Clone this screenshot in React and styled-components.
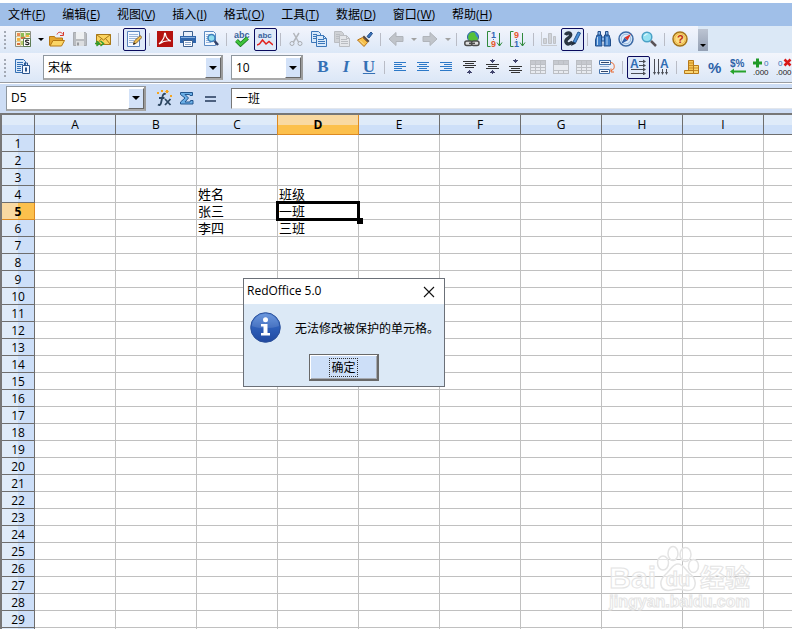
import React, { useState } from 'react'
import styled, { createGlobalStyle, css } from 'styled-components'

const GlobalStyle = createGlobalStyle`
  * {
    box-sizing: border-box;
  }
  body {
    margin: 0;
    overflow: hidden;
    background: #fff;
    color: #000;
    font: 12px "Open Sans", "Noto Sans CJK SC", sans-serif;
  }
  button, input, select {
    font: inherit;
    color: inherit;
  }
`

const Window = styled.div`
  position: relative;
  display: flex;
  flex-direction: column;
  height: 100vh;
  padding-top: 3px;
  overflow: hidden;
`
const MenuBar = styled.nav`
  display: flex;
  flex: none;
  gap: 1px;
  height: 23px;
  background: #a0bfe8;
`
const MenuItem = styled.button`
  height: 23px;
  padding: 0 8px;
  border: none;
  background: none;
  white-space: nowrap;
  line-height: 23px;

  &:hover {
    background: #c3d8f4;
  }
`
const Toolbar = styled.div`
  display: flex;
  flex: none;
  align-items: center;
  height: ${(p) => (p.$last ? '29px' : '27px')};
  background: #dbe8f6;
  overflow: hidden;
`
const ToolGroup = styled.div`
  display: flex;
  flex: none;
  align-items: center;
  height: 100%;
  padding-right: ${(p) => (p.$open ? '0' : '6px')};
  background: linear-gradient(#f3f5fc, #dbe7f7);
`
const Grip = styled.span`
  width: 2px;
  height: 18px;
  margin: 0 6px 0 4px;
  background: repeating-linear-gradient(#a3a9b4 0 2px, transparent 2px 4px);
`
const ToolButton = styled.button`
  display: grid;
  place-items: center;
  flex: none;
  width: 23px;
  height: 23px;
  padding: 0 1px 1px 0;
  border: 1px solid transparent;
  border-radius: 2px;
  background: none;

  ${(p) => p.$active && css`
    border-color: #0a0a5c;
    background: #dfe9f8;
  `}
`
const LetterButton = styled(ToolButton)`
  color: #3571b5;
  font: ${(p) => (p.$italic ? 'italic' : 'normal')} bold 17px/20px "Liberation Serif", serif;
  text-decoration: ${(p) => (p.$underline ? 'underline' : 'none')};
`
const DropButton = styled.button`
  display: grid;
  place-items: center;
  width: 11px;
  height: 23px;
  padding: 0;
  border: none;
  background: none;

  &::after {
    content: "";
    border: 3px solid transparent;
    border-top-color: ${(p) => (p.disabled ? '#a2a2a2' : '#000')};
    border-bottom: none;
  }
`
const Separator = styled.span`
  width: 1px;
  height: 13px;
  margin: 0 4px 0 3px;
  background: #b9bcc6;
`
const Overflow = styled.button`
  align-self: center;
  display: flex;
  flex: none;
  align-items: flex-end;
  justify-content: center;
  width: 10px;
  height: 22px;
  padding: 0 0 4px;
  border: none;
  background: linear-gradient(#bcc4d2, #94a0b4);

  &::after {
    content: "";
    border: 3px solid transparent;
    border-top-color: #000;
    border-bottom: none;
  }
`
const Combo = styled.div`
  display: flex;
  flex: none;
  width: ${(p) => p.$width};
  height: 25px;
  margin-left: ${(p) => p.$gap || '0'};
  border: 1px solid #8f979f;
  border-right: 2px solid #9b9b9b;
  border-bottom: 2px solid #a9a9a9;
  background: #fff;
`
const ComboInput = styled.input`
  flex: 1;
  min-width: 0;
  padding: 0 0 0 4px;
  border: none;
  outline: none;
  background: none;
  font-size: 12px;
`
const ComboArrow = styled.button`
  display: grid;
  place-items: center;
  flex: none;
  width: 16px;
  margin: 1px 0 0;
  padding: 0;
  border: 1px solid #fff;
  border-right: 1px solid #666;
  border-bottom: 1px solid #666;
  background: #d3e2f8;

  &::after {
    content: "";
    border: 4px solid transparent;
    border-top-color: #000;
    border-bottom: none;
  }
`
const Spacer = styled.span`
  flex: none;
  width: 9px;
`
const FormulaBar = styled.div`
  display: flex;
  flex: none;
  align-items: center;
  height: 31px;
  padding-left: 6px;
  border-top: 1px solid #9a9da2;
  box-shadow: inset 0 1px #fff;
  background: #cdddf5;
`
const FormulaTools = styled.div`
  display: flex;
  flex: none;
  margin: 0 9px 0 7px;
`
const FormulaInput = styled.input`
  flex: 1;
  min-width: 0;
  height: 21px;
  padding: 0 4px;
  border: 1px solid #777;
  border-right: none;
  border-bottom-color: #e2e6ec;
  outline: none;
  background: #fff;
`

const SheetArea = styled.main`
  flex: 1;
  min-height: 0;
  overflow: hidden;
  border-top: 2px solid #777;
  border-left: 2px solid #777;
`
const Sheet = styled.table`
  width: max-content;
  table-layout: fixed;
  border-collapse: separate;
  border-spacing: 0;
`
const Corner = styled.th`
  width: 33px;
  height: 20px;
  padding: 0;
  border-right: 1px solid #6e6e6e;
  border-bottom: 1px solid #6e6e6e;
  background: linear-gradient(#dfebf9 50%, #cfe0f8 50%);
`
const ColHead = styled.th`
  width: 81px;
  height: 20px;
  padding: 0;
  border-right: 1px solid ${(p) => (p.$selected ? '#dd8a22' : '#6e6e6e')};
  border-bottom: 1px solid ${(p) => (p.$selected ? '#dd8a22' : '#6e6e6e')};
  box-shadow: ${(p) => (p.$selected ? '-1px 0 #dd8a22' : 'none')};
  background: ${(p) => (p.$selected
    ? 'linear-gradient(#f9d9a2 50%, #fcc04c 50%)'
    : 'linear-gradient(#dfebf9 50%, #cddff8 50%)')};
  font-weight: ${(p) => (p.$selected ? 700 : 400)};
  line-height: 19px;
`
const RowHead = styled.th`
  height: 17px;
  padding: 1px 0 0;
  border-right: 1px solid ${(p) => (p.$selected ? '#dd8a22' : '#6e6e6e')};
  border-bottom: 1px solid ${(p) => (p.$selected ? '#dd8a22' : '#6e6e6e')};
  background: ${(p) => (p.$selected
    ? 'linear-gradient(90deg, #f9d9a2 50%, #fcc04c 50%)'
    : 'linear-gradient(90deg, #dfebf9 50%, #cddff8 50%)')};
  font-weight: ${(p) => (p.$selected ? 700 : 400)};
  line-height: 15px;
`
const Cell = styled.td`
  height: 17px;
  padding: 0 0 0 1px;
  border-right: 1px solid #c0c0c0;
  border-bottom: 1px solid #c0c0c0;
  font-size: 13px;
  line-height: 16px;
  white-space: nowrap;

  ${(p) => p.$selected && css`
    position: relative;

    &::before {
      content: "";
      position: absolute;
      inset: -2px;
      border: 3px solid #000;
    }
    &::after {
      content: "";
      position: absolute;
      right: -5px;
      bottom: -5px;
      width: 6px;
      height: 6px;
      background: #000;
    }
  `}
`

const Dialog = styled.section`
  position: absolute;
  left: 243px;
  top: 278px;
  border: 1px solid #6b7078;
  background: #dce9f6;
`
const DialogTitle = styled.header`
  display: flex;
  align-items: center;
  justify-content: space-between;
  height: 25px;
  padding: 0 9px 2px 3px;
  background: #fff;
`
const DialogClose = styled.button`
  display: grid;
  padding: 2px 0 0;
  border: none;
  background: none;
`
const DialogBody = styled.div`
  display: flex;
  align-items: center;
  gap: 14px;
  padding: 8px 5px 0 6px;
`
const Message = styled.p`
  margin: 0;
  white-space: nowrap;
`
const DialogActions = styled.div`
  display: flex;
  justify-content: center;
  padding: 11px 0 5px;
`
const OkButton = styled.button`
  display: grid;
  place-items: center;
  width: 70px;
  height: 27px;
  padding: 0;
  border: 1px solid #696969;
  border-right-width: 2px;
  border-bottom-width: 2px;
  box-shadow: inset 1px 1px #fff, inset -1px -1px #a6aab2;
  background: #cddff8;

  span {
    padding: 0 1px;
    border: 1px dotted #333;
    line-height: 17px;
  }
`

const Watermark = styled.div`
  position: absolute;
  right: 42px;
  bottom: 17px;
  display: flex;
  flex-direction: column;
  color: rgba(255, 255, 255, 0.5);
  font-family: "Liberation Sans", "Noto Sans CJK SC", sans-serif;
  font-weight: 700;
  pointer-events: none;
  -webkit-text-stroke: 1px #e4e4e4;
`
const WatermarkTop = styled.div`
  display: flex;
  align-items: flex-end;
  height: 47px;
  font-size: 30px;
  line-height: 28px;
`
const Paw = styled.span`
  display: grid;
  place-items: end center;
  width: 44px;

  > * {
    grid-area: 1 / 1;
  }
  b {
    font-size: 20px;
    line-height: 25px;
  }
`
const WatermarkCjk = styled.span`
  font-size: 25px;
`
const WatermarkUrl = styled.span`
  font-size: 16px;
  line-height: 20px;
`

/* ---------- icons ---------- */

const Icon = ({ children, size = 16, crisp }) => (
  <svg width={size} height={size} viewBox={`0 0 ${size} ${size}`} fill="none" shapeRendering={crisp ? 'crispEdges' : 'auto'} aria-hidden="true">
    {children}
  </svg>
)
const IconText = styled.text`
  font: bold ${(p) => p.$size || '8px'} "Liberation Sans", sans-serif;
`

const NewIcon = () => (
  <Icon>
    <path d="M.5.5h15v15H.5z" fill="#f7f3dc" stroke="#8c8f83" />
    <path d="M1 5.500h14M1 10.500h6M5.500 1v14M10.500 1v6" stroke="#d6cfa6" />
    <path d="M2 2h3v3H2z" fill="#ea8c52" />
    <path d="M6 2h3v4H6zM11 2h4v2h-4z" fill="#8dbb54" />
    <path d="M11 4h3v2h-3zM2 7h3v3H2z" fill="#f4b63e" />
    <path d="M6 6h4v2H6zM2 12h3v2H2z" fill="#d9713c" />
    <path d="M6 10h2v4H6z" fill="#b7cb6a" />
    <path d="M8.500 7.500h7v8h-7z" fill="#fff" stroke="#5d7d55" />
    <path d="M14 9.500c-1-.7-3.500-.7-3.500.8 0 1.400 3.500.8 3.500 2.200 0 1.300-2.500 1.300-3.700.6" stroke="#222" strokeWidth="1.200" />
  </Icon>
)
const OpenIcon = () => (
  <Icon>
    <path d="M.5 14.500V5.500h5l1 1.500h7v3" fill="#e3a52f" stroke="#b67814" />
    <path d="M1 15l3-5.500h11.500l-3 5.500z" fill="#fbd566" stroke="#b67814" />
    <path d="M8 3.500c1-3 4.500-3 6 0M14.500 1v3.500H11" stroke="#d8392b" />
  </Icon>
)
const SaveIcon = () => (
  <Icon>
    <path d="M1.500 1.500h12l1 1v12h-13z" fill="#b9bcc1" stroke="#a9acb1" />
    <path d="M4 1h8v7H4z" fill="#eef0f2" />
    <path d="M4 10h8v5H4z" fill="#dcdee1" />
    <path d="M6 11.500v3" stroke="#989ba0" strokeWidth="2" />
  </Icon>
)
const MailIcon = () => (
  <Icon>
    <path d="M1.500 3.500h14v10h-14z" fill="#fbd35f" stroke="#a97818" />
    <path d="M1.500 3.500l7 5.500 7-5.500M1.500 13.500l5-6M15.500 13.500l-5-6" stroke="#a97818" />
    <path d="M0 12.500h4M1.500 10l3 2.500-3 2.500M5.500 10l3 2.500-3 2.500" stroke="#2e9e30" strokeWidth="1.500" />
  </Icon>
)
const EditIcon = () => (
  <Icon>
    <path d="M1.500.5h12v15h-12z" fill="#f5f9ff" stroke="#5a84bd" />
    <path d="M3 3.500h9M3 5.500h9M3 7.500h8M3 9.500h5M3 11.500h4" stroke="#9ab5da" />
    <path d="M7.500 13l.8-3 6-5.500 1.500 2-5.500 5.700z" fill="#f0bd4a" stroke="#7e643a" />
    <path d="M7 14l1-2.500 1.500 1.500z" fill="#222" />
  </Icon>
)
const PdfIcon = () => (
  <Icon>
    <path d="M0 0h16v16H0z" fill="#b5120f" />
    <path d="M2 13C5 10.500 7.500 6 7.500 3c0-1.200 1-1.200 1 0C8.500 6 11 9.500 14 10c-4-.8-8 .3-12 3z" stroke="#fff" strokeWidth="1.200" />
  </Icon>
)
const PrintIcon = () => (
  <Icon>
    <path d="M3.500.5h9v5h-9z" fill="#e9f0fa" stroke="#3e618f" />
    <path d="M0 5h16v7H0z" fill="#2f66ad" />
    <path d="M1 6.500h14" stroke="#8bb2e0" />
    <path d="M3.500 9.500h9v6h-9z" fill="#fff" stroke="#3e618f" />
    <path d="M5 11.500h6M5 13.500h6" stroke="#8aa5c9" />
  </Icon>
)
const PreviewIcon = () => (
  <Icon>
    <path d="M1.500.5h9l2 2v12h-11z" fill="#f4f8fe" stroke="#5c8ac2" />
    <path d="M3 3.500h5M3 5.500h4M3 7.500h3M3 9.500h3M3 11.500h5" stroke="#9ab5da" />
    <circle cx="8.500" cy="7" r="3.500" fill="#8fdcee" stroke="#3c7ebb" strokeWidth="1.500" />
    <path d="M11.500 10l3.500 4" stroke="#34436a" strokeWidth="2.500" />
  </Icon>
)
const SpellIcon = () => (
  <Icon>
    <IconText x="0" y="7" $size="9px" fill="#3a639d">abc</IconText>
    <path d="M2.500 9.500l4 4 7-6.500" stroke="#17751c" strokeWidth="4" />
    <path d="M2.500 9.500l4 4 7-6.500" stroke="#3fc33c" strokeWidth="2.500" />
  </Icon>
)
const AutoSpellIcon = () => (
  <Icon>
    <IconText x="1" y="7" fill="#3a639d">abc</IconText>
    <path d="M0 14l2.500-1 3-4L9 13l3-2.500 4 3.500" stroke="#e2211c" strokeWidth="1.500" />
  </Icon>
)
const CutIcon = () => (
  <Icon>
    <path d="M5.500 2l5 9M11 2L5.500 11" stroke="#b3b6bb" strokeWidth="1.500" />
    <circle cx="4" cy="12.500" r="2" stroke="#a9acb1" />
    <circle cx="12" cy="12.500" r="2" stroke="#a9acb1" />
  </Icon>
)
const CopyIcon = ({ gray }) => {
  const line = gray ? '#babdc2' : '#3c77b9'
  const fill = gray ? '#e4e6ea' : '#d8e9fa'
  return (
    <Icon>
      <path d="M.5.5h7l2 2v9h-9z" fill={gray ? '#cfd1d5' : fill} stroke={line} />
      <path d="M2 3.500h4M2 5.500h3M2 7.500h3" stroke={line} />
      <path d="M5.500 4.500h7l3 3v8h-10z" fill={fill} stroke={line} />
      <path d="M7 8.500h6M7 10.500h7M7 12.500h7M12.500 4.500v3h3" stroke={line} />
    </Icon>
  )
}
const BrushIcon = () => (
  <Icon>
    <path d="M10 5.500L14 1l1.500 1.500L12 7z" fill="#3c76be" stroke="#244f8a" />
    <path d="M7 4.500l5.500 5.500-1.500 1.500L5.500 6z" fill="#5a493a" />
    <path d="M5.500 6.500l5 5L7 15.500.5 9z" fill="#f7c04a" stroke="#b6731a" />
    <path d="M3 9.500l4 4" stroke="#fbe29b" />
  </Icon>
)
const BackIcon = () => (
  <Icon><path d="M1 8l7-6.500v4h7v5H8v4z" fill="#c0c4ca" stroke="#b0b4ba" /></Icon>
)
const ForwardIcon = () => (
  <Icon><path d="M15 8L8 1.500v4H1v5h7v4z" fill="#c0c4ca" stroke="#b0b4ba" /></Icon>
)
const LinkIcon = () => (
  <Icon>
    <circle cx="9" cy="6" r="5.500" fill="#3e8bd6" stroke="#2b5f9c" />
    <path d="M5 3c2-2 5-2 6-1l1 3 2 2-1 3H5L4 6z" fill="#56c03a" />
    <rect x=".8" y="10" width="7.500" height="4.500" rx="2" fill="#ddd" stroke="#4c4c4c" strokeWidth="1.500" />
    <rect x="7.500" y="10" width="7.500" height="4.500" rx="2" fill="#ddd" stroke="#4c4c4c" strokeWidth="1.500" />
    <path d="M5 12.300h6" stroke="#4c4c4c" strokeWidth="1.500" />
  </Icon>
)
const SortIcon = ({ desc }) => (
  <Icon size={18}>
    <path d="M4.500 1.500h-3v15h3" stroke="#2f8a3c" />
    <IconText x="5" y="8" $size="9px" fill={desc ? '#e8592b' : '#3366b5'}>{desc ? '9' : '1'}</IconText>
    <path d="M7.500 9v1" stroke="#5d79b0" />
    <IconText x="5" y="17" $size="9px" fill={desc ? '#3366b5' : '#e8592b'}>{desc ? '1' : '9'}</IconText>
    <path d="M13.500 3v13M11 12.500l2.500 3.500 2.500-3.500" stroke="#2f8a3c" />
  </Icon>
)
const ChartIcon = () => (
  <Icon>
    <path d="M.5 1v13.500H16" stroke="#c8cbd0" />
    <path d="M2.500 7.500h3v5h-3zM7.500 2.500h3v10h-3zM12.500 5.500h2v7h-2z" fill="#d0d3d8" stroke="#bfc2c7" />
  </Icon>
)
const DrawIcon = () => (
  <Icon size={18}>
    <path d="M2.500 5c1.500-3 6-2.500 5 .5S2 9 3 12s4 2 6.500 0" stroke="#2a3542" strokeWidth="3.500" />
    <path d="M10 12l5-10 2.500 1-5 10z" fill="#4c92da" stroke="#245490" />
    <path d="M8 16l1.500-4.500 3.500 2z" fill="#1d2b3d" />
  </Icon>
)
const FindIcon = () => (
  <Icon>
    <path d="M2 4h4.500v5l.5 6H.5V9zM9.500 4H14l1.500 5v6H9l.5-6z" fill="#3f7fc8" stroke="#234f8b" />
    <path d="M3 .5h2.500V4H3zM10.500.5H13V4h-2.500zM6.500 6h3v4h-3z" fill="#86b5e8" stroke="#234f8b" />
    <path d="M2.500 6v8M12 6v8" stroke="#b9d7f5" />
  </Icon>
)
const NavigatorIcon = () => (
  <Icon>
    <circle cx="8" cy="8" r="7" fill="#dcecfb" stroke="#3b6aa6" strokeWidth="1.500" />
    <circle cx="8" cy="8" r="4.800" stroke="#98b8dd" />
    <path d="M13 3L9.500 9.500l-3-3z" fill="#df3327" />
    <path d="M3 13l3.500-6.500 3 3z" fill="#2f5fa8" />
  </Icon>
)
const ZoomIcon = () => (
  <Icon>
    <circle cx="6" cy="6" r="4.800" fill="#97e2f2" stroke="#4aa1c6" strokeWidth="1.500" />
    <path d="M3.500 5c1-2 2-2 3-2" stroke="#fff" />
    <path d="M10 10l5 5" stroke="#5a5357" strokeWidth="2.500" />
  </Icon>
)
const HelpIcon = () => (
  <Icon>
    <circle cx="8" cy="8" r="7" fill="#fbdc84" stroke="#a5741a" strokeWidth="1.500" />
    <circle cx="8" cy="8" r="5.300" stroke="#eeb945" />
    <IconText x="5" y="12" $size="11px" fill="#bd2d16">?</IconText>
  </Icon>
)
const StylesIcon = () => (
  <Icon>
    <path d="M.5.5h8l2 2v11H.5z" fill="#d9e8fa" stroke="#3571b5" />
    <path d="M2 3.500h6M2 5.500h6M2 7.500h4M2 9.500h4M2 11.500h4" stroke="#3571b5" />
    <path d="M7.500 6.500h7v8h-7z" fill="#f4f8fe" stroke="#2d568e" />
    <path d="M9.500 6.500V4h3v2.500" stroke="#2d568e" />
    <path d="M10 8.500h2v4h-2z" fill="#2d568e" />
  </Icon>
)
const AlignIcon = ({ side }) => {
  const short = side === 'left' ? 2 : side === 'center' ? 4 : 6
  return (
    <Icon crisp>
      <path d={`M2 3.500h12M${short} 5.500h8M2 7.500h12M${short} 9.500h8M2 11.500h12`} stroke="#2c79c8" />
    </Icon>
  )
}
const VAlignIcon = ({ at }) => (
  <Icon size={18} crisp>
    {at === 'top' && <path d="M3 3.500h13M5 5.500h9M3 7.500h13M5 9.500h9" stroke="#333" />}
    {at === 'middle' && <path d="M3 6.500h13M5 8.500h9M3 10.500h13" stroke="#333" />}
    {at === 'bottom' && <path d="M3 8.500h13M5 10.500h9M3 12.500h13M5 14.500h9" stroke="#333" />}
    {at !== 'bottom' && <path d="M9 12h1v1h1v1h1v1h-2v1H9v-1H7v-1h1v-1h1z" fill="#43466e" />}
    {at !== 'top' && <path d="M9 1h1v1h2v1h-1v1h-1v1H9V4H8V3H7V2h2z" fill="#43466e" />}
  </Icon>
)
const TableIcon = ({ merged }) => (
  <Icon crisp>
    <path d="M.5 1.500h15v13H.5z" fill="#e8ebf0" stroke="#bcbfc4" />
    <path d="M1 2h14v3H1z" fill="#c6c9cf" />
    <path d={merged ? 'M1 5.500h14M1 11.500h14M5.500 2v3M10.500 2v3M5.500 12v2M10.500 12v2' : 'M1 5.500h14M1 8.500h14M1 11.500h14M5.500 2v12M10.500 2v12'} stroke="#bcbfc4" />
  </Icon>
)
const WrapIcon = () => (
  <Icon>
    <path d="M.5 1.500h11v4H.5zM.5 10.500h10v4H.5z" fill="#f4f8fe" stroke="#4372ac" />
    <path d="M1 7.500h9" stroke="#9db6d6" />
    <path d="M2 3.500h8M2 12.500h7" stroke="#35486a" />
    <path d="M11.500 3.500c4 0 4 4 3.500 6l-3 2.500M12 9.500V13h3" stroke="#e8652b" />
  </Icon>
)
const TextRightIcon = () => (
  <Icon>
    <IconText x="0" y="9" $size="12px" fill="#2f6cb3">A</IconText>
    <path d="M9 2.500h5M9 6.500h5M1 10.500h13M1 14.500h13" stroke="#4a4d55" />
    <path d="M13 .5l3 2-3 2zM13 4.500l3 2-3 2zM13 8.500l3 2-3 2zM13 12.500l3 2-3 2z" fill="#4a4d55" />
  </Icon>
)
const TextDownIcon = () => (
  <Icon>
    <IconText x="7" y="9" $size="12px" fill="#2f6cb3">A</IconText>
    <path d="M1.500 0v14M5.500 0v14M9.500 10v4M13.500 10v4" stroke="#4a4d55" />
    <path d="M0 13l1.500 3L3 13zM4 13l1.500 3L7 13zM8 13l1.500 3 1.500-3zM12 13l1.500 3 1.500-3z" fill="#4a4d55" />
  </Icon>
)
const CurrencyIcon = () => (
  <Icon>
    <path d="M4.500 1.500h5v10h-5z" fill="#f6c453" stroke="#b77a1b" />
    <path d="M5 4h4M5 6.500h4M5 9h4" stroke="#c98d27" />
    <path d="M.5 11.500h9v3h-9zM9.500 6.500h5v8h-5z" fill="#fbd673" stroke="#b77a1b" />
    <path d="M10 9h4M10 11.500h4" stroke="#c98d27" />
  </Icon>
)
const PercentIcon = () => (
  <Icon><IconText x="1" y="14" $size="15px" fill="#2c62a8">%</IconText></Icon>
)
const StandardIcon = () => (
  <Icon>
    <IconText x="0" y="8" $size="10px" fill="#2c62a8">$%</IconText>
    <path d="M0 12.500L4 9.500v2h12v2H4v2z" fill="#27a32b" />
  </Icon>
)
const Decimals = styled.text`
  font: 8px "Liberation Sans", sans-serif;
`
const DecimalIcon = ({ remove }) => (
  <Icon size={18}>
    <Decimals x={remove ? 3 : 12} y="8" fill="#3770b8">0</Decimals>
    {remove
      ? <path d="M9.500 1.500l6 6M15.500 1.500l-6 6" stroke="#d81818" strokeWidth="2.500" />
      : <path d="M1 5h9M5.500.5v9" stroke="#209a29" strokeWidth="3" />}
    <Decimals x="1" y="17" fill="#222">.000</Decimals>
  </Icon>
)
const FunctionIcon = () => (
  <Icon>
    <path d="M9.500 4.500c-1-1.500-2.500-.5-3 2L5 13c-.5 2-1.500 2.500-3 1.500M3 8h5.500" stroke="#2c4660" strokeWidth="1.800" />
    <path d="M9 9l5.500 6M14.500 9L9 15" stroke="#2c4660" strokeWidth="1.800" />
    <path d="M2 2l1 1-1 1-1-1zM6 0l1 1-1 1-1-1zM11 0l1.500 1.500L11 3 9.500 1.500zM15 5l1 1-1 1-1-1z" fill="#f6a51e" stroke="#f6a51e" />
  </Icon>
)
const SumIcon = () => (
  <Icon><path d="M1.500 2.500h12v3h-2.500l-.5-1H6L9.500 8 6 12h5l.5-1.500H14v3.500H1.500v-2L6 8 1.500 4.500z" fill="#6aaee6" stroke="#22578f" /></Icon>
)
const EqualsIcon = () => (
  <Icon crisp><path d="M3 7h11M3 11h11" stroke="#4d6180" strokeWidth="2" /></Icon>
)
const InfoIcon = () => (
  <svg width="31" height="31" viewBox="0 0 31 31" aria-hidden="true">
    <defs>
      <linearGradient id="ball" x2="0" y2="1">
        <stop offset="0" stopColor="#5b8ddb" />
        <stop offset=".5" stopColor="#2e5fb9" />
        <stop offset="1" stopColor="#2149a0" />
      </linearGradient>
    </defs>
    <circle cx="15.500" cy="15.500" r="14.800" fill="url(#ball)" stroke="#2a4f99" />
    <path d="M2 14C3 6 9 2 15.500 2S28 6 29 14c-8 3-19 3-27 0z" fill="#fff" opacity=".12" />
    <circle cx="15.500" cy="7.700" r="2.500" fill="#fff" />
    <path d="M11 12h6.500v9H20v2.500h-9V21h2.500v-6.500H11z" fill="#fff" />
  </svg>
)
const CloseIcon = () => (
  <svg width="12" height="12" viewBox="0 0 12 12" aria-hidden="true">
    <path d="M1 1l10 10M11 1L1 11" stroke="#111" strokeWidth="1.100" />
  </svg>
)
const PawShape = () => (
  <svg width="44" height="47" viewBox="0 0 44 47" fill="#fff" fillOpacity=".5" stroke="#e4e4e4" strokeWidth="1.500" aria-hidden="true">
    <ellipse cx="7" cy="18" rx="5.500" ry="7" />
    <ellipse cx="17" cy="8.500" rx="5" ry="7" />
    <ellipse cx="29.500" cy="9.500" rx="5.500" ry="7" />
    <ellipse cx="37.500" cy="21" rx="5" ry="6.500" />
    <path d="M22 19c5 0 7 5 11 9 4 3 7 7 6 12-1 6-7 6-11 5-4-1-8-1-12 0-5 1-10 0-11-5-1-6 3-9 6-12 4-4 6-9 11-9z" />
  </svg>
)

/* ---------- data ---------- */

const menus = [
  ['文件', 'F'], ['编辑', 'E'], ['视图', 'V'], ['插入', 'I'], ['格式', 'O'],
  ['工具', 'T'], ['数据', 'D'], ['窗口', 'W'], ['帮助', 'H'],
]

const standardTools = [
  { label: '新建', icon: <NewIcon />, drop: true },
  { label: '打开', icon: <OpenIcon /> },
  { label: '保存', icon: <SaveIcon />, disabled: true },
  { label: '邮件', icon: <MailIcon /> },
  null,
  { label: '编辑文件', icon: <EditIcon />, active: true },
  null,
  { label: 'PDF', icon: <PdfIcon /> },
  { label: '打印', icon: <PrintIcon /> },
  { label: '预览', icon: <PreviewIcon /> },
  null,
  { label: '拼写检查', icon: <SpellIcon /> },
  { label: '自动拼写检查', icon: <AutoSpellIcon />, active: true },
  null,
  { label: '剪切', icon: <CutIcon />, disabled: true },
  { label: '复制', icon: <CopyIcon /> },
  { label: '粘贴', icon: <CopyIcon gray />, disabled: true },
  { label: '格式刷', icon: <BrushIcon /> },
  null,
  { label: '撤销', icon: <BackIcon />, disabled: true, drop: true },
  { label: '恢复', icon: <ForwardIcon />, disabled: true, drop: true },
  null,
  { label: '超链接', icon: <LinkIcon /> },
  { label: '升序', icon: <SortIcon /> },
  { label: '降序', icon: <SortIcon desc /> },
  null,
  { label: '图表', icon: <ChartIcon />, disabled: true },
  { label: '绘图', icon: <DrawIcon />, active: true },
  null,
  { label: '查找', icon: <FindIcon /> },
  { label: '导航', icon: <NavigatorIcon /> },
  { label: '缩放', icon: <ZoomIcon /> },
  null,
  { label: '帮助', icon: <HelpIcon /> },
]

const formatTools = [
  null,
  { label: '左对齐', icon: <AlignIcon side="left" /> },
  { label: '居中', icon: <AlignIcon side="center" /> },
  { label: '右对齐', icon: <AlignIcon side="right" /> },
  { label: '顶端', icon: <VAlignIcon at="top" /> },
  { label: '垂直居中', icon: <VAlignIcon at="middle" /> },
  { label: '底端', icon: <VAlignIcon at="bottom" /> },
  { label: '表格', icon: <TableIcon />, disabled: true },
  { label: '合并', icon: <TableIcon merged />, disabled: true },
  { label: '拆分', icon: <TableIcon />, disabled: true },
  { label: '自动换行', icon: <WrapIcon /> },
  null,
  { label: '横排', icon: <TextRightIcon />, active: true },
  { label: '竖排', icon: <TextDownIcon /> },
  null,
  { label: '货币', icon: <CurrencyIcon /> },
  { label: '百分比', icon: <PercentIcon /> },
  { label: '标准', icon: <StandardIcon /> },
  { label: '增加小数位', icon: <DecimalIcon /> },
  { label: '删除小数位', icon: <DecimalIcon remove /> },
]

const columns = 'ABCDEFGHIJKLMNOP'.split('')
const rows = Array.from({ length: 40 }, (_, i) => i + 1)
const cells = {
  C4: '姓名', D4: '班级',
  C5: '张三', D5: '一班',
  C6: '李四', D6: '三班',
}

const Tools = ({ items }) => items.map((tool, i) => (
  tool === null ? <Separator key={i} /> : (
    <React.Fragment key={i}>
      <ToolButton $active={tool.active} disabled={tool.disabled} aria-label={tool.label}>{tool.icon}</ToolButton>
      {tool.drop && <DropButton disabled={tool.disabled} aria-label={`${tool.label}选项`} />}
    </React.Fragment>
  )
))

const ComboBox = ({ label, value, width, gap }) => {
  const [text, setText] = useState(value)
  return (
    <Combo $width={width} $gap={gap}>
      <ComboInput aria-label={label} value={text} onChange={(e) => setText(e.target.value)} />
      <ComboArrow aria-label={`${label}列表`} />
    </Combo>
  )
}

const App = () => {
  const [open, setOpen] = useState(true)
  const [formula, setFormula] = useState(cells.D5)

  return (
    <Window>
      <GlobalStyle />
      <MenuBar>
        {menus.map(([name, key]) => (
          <MenuItem key={key}>{name}(<u>{key}</u>)</MenuItem>
        ))}
      </MenuBar>

      <Toolbar>
        <ToolGroup>
          <Grip />
          <Tools items={standardTools} />
        </ToolGroup>
        <Overflow aria-label="更多按钮" />
      </Toolbar>

      <Toolbar $last>
        <ToolGroup $open>
          <Grip />
          <ToolButton aria-label="样式"><StylesIcon /></ToolButton>
          <ComboBox label="字体" value="宋体" width="180px" gap="8px" />
          <ComboBox label="字号" value="10" width="72px" gap="8px" />
          <Spacer />
          <LetterButton aria-label="粗体">B</LetterButton>
          <LetterButton $italic aria-label="斜体">I</LetterButton>
          <LetterButton $underline aria-label="下划线">U</LetterButton>
          <Tools items={formatTools} />
        </ToolGroup>
      </Toolbar>

      <FormulaBar>
        <ComboBox label="名称框" value="D5" width="140px" />
        <FormulaTools>
          <ToolButton aria-label="函数向导"><FunctionIcon /></ToolButton>
          <ToolButton aria-label="求和"><SumIcon /></ToolButton>
          <ToolButton aria-label="函数"><EqualsIcon /></ToolButton>
        </FormulaTools>
        <FormulaInput aria-label="输入行" value={formula} onChange={(e) => setFormula(e.target.value)} />
      </FormulaBar>

      <SheetArea>
        <Sheet>
          <thead>
            <tr>
              <Corner />
              {columns.map((c) => <ColHead key={c} scope="col" $selected={c === 'D'}>{c}</ColHead>)}
            </tr>
          </thead>
          <tbody>
            {rows.map((r) => (
              <tr key={r}>
                <RowHead scope="row" $selected={r === 5}>{r}</RowHead>
                {columns.map((c) => (
                  <Cell key={c} $selected={c + r === 'D5'}>{cells[c + r]}</Cell>
                ))}
              </tr>
            ))}
          </tbody>
        </Sheet>
      </SheetArea>

      <Watermark>
        <WatermarkTop>
          <span>Bai</span>
          <Paw><PawShape /><b>du</b></Paw>
          <WatermarkCjk>经验</WatermarkCjk>
        </WatermarkTop>
        <WatermarkUrl>jingyan.baidu.com</WatermarkUrl>
      </Watermark>

      {open && (
        <Dialog role="dialog" aria-label="RedOffice 5.0">
          <DialogTitle>
            RedOffice 5.0
            <DialogClose aria-label="关闭" onClick={() => setOpen(false)}><CloseIcon /></DialogClose>
          </DialogTitle>
          <DialogBody>
            <InfoIcon />
            <Message>无法修改被保护的单元格。</Message>
          </DialogBody>
          <DialogActions>
            <OkButton onClick={() => setOpen(false)}><span>确定</span></OkButton>
          </DialogActions>
        </Dialog>
      )}
    </Window>
  )
}

export default App
